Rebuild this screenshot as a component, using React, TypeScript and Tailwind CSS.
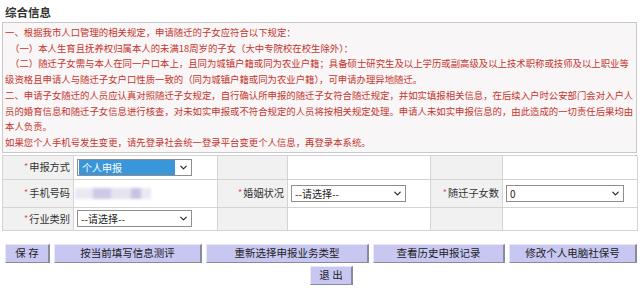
import { ChevronDown } from 'lucide-react';

const notice = [
  { text: '一、根据我市人口管理的相关规定，申请随迁的子女应符合以下规定：', indent: false },
  { text: '（一）本人生育且抚养权归属本人的未满18周岁的子女（大中专院校在校生除外）：', indent: true },
  { text: '（二）随迁子女需与本人在同一户口本上，且同为城镇户籍或同为农业户籍；具备硕士研究生及以上学历或副高级及以上技术职称或技师及以上职业等', indent: true },
  { text: '级资格且申请人与随迁子女户口性质一致的（同为城镇户籍或同为农业户籍），可申请办理异地随迁。', indent: false },
  { text: '二、申请子女随迁的人员应认真对照随迁子女规定，自行确认所申报的随迁子女符合随迁规定，并如实填报相关信息，在后续入户时公安部门会对入户人', indent: false },
  { text: '员的婚育信息和随迁子女信息进行核查，对未如实申报或不符合规定的人员将按相关规定处理。申请人未如实申报信息的，由此造成的一切责任后果均由', indent: false },
  { text: '本人负责。', indent: false },
  { text: '如果您个人手机号发生变更，请先登录社会统一登录平台变更个人信息，再登录本系统。', indent: false },
];

function Label({ text }: { text?: string }) {
  return (
    <div className="flex items-center justify-end pr-[3px] bg-[#f1f1f1] border-r border-b border-[#d4d4d4] text-[10.2px] text-[#333]">
      {text && (
        <>
          <span className="text-[#e05050] text-[9px] mr-[1px]">*</span>
          {text}
        </>
      )}
    </div>
  );
}

function Cell({ children }: { children?: React.ReactNode }) {
  return (
    <div className="flex items-center pl-[3px] bg-white border-r border-b border-[#d4d4d4]">
      {children}
    </div>
  );
}

function FakeSelect({ value, width, selected }: { value: string; width: string; selected?: boolean }) {
  return (
    <div className={`${width} h-[17px] flex items-center border border-[#8e8e8e] bg-white text-[10px] text-[#222]`}>
      <div className={`flex-1 h-full flex items-center pl-[3px] ${selected ? 'bg-[#3a96d8] text-white m-[1px] h-[13px]' : ''}`}>
        {value}
      </div>
      <ChevronDown className="w-[11px] h-[11px] mx-[2px] text-[#222]" strokeWidth={2.5} />
    </div>
  );
}

function Btn({ label, width }: { label: string; width: string }) {
  return (
    <button
      type="button"
      className={`${width} h-[19px] flex items-center justify-center bg-[#c7c7f2] border-t border-l border-[#e8e8fa] border-r-2 border-b border-r-[#8a8a9a] border-b-[#8a8a9a] text-[10.5px] text-[#222]`}
    >
      {label}
    </button>
  );
}

export default function App() {
  return (
    <div className="w-[640px] h-[292px] bg-white overflow-hidden font-['Noto_Sans_CJK_SC','Noto_Sans',sans-serif]">
      <div className="h-[22px] pl-[5px] pt-[4px] text-[11.5px] leading-[16px] font-bold text-[#333]">综合信息</div>

      <div className="ml-[2px] mr-[3px] border border-[#c9c9c9] bg-[#f8f6f6] pl-[2px] pt-[2px] pb-[1px] text-[9.4px] leading-[15.7px] text-[#c4352e]">
        {notice.map((line, i) => (
          <div key={i} className={`whitespace-nowrap ${line.indent ? 'pl-[5px]' : ''}`}>
            {line.text}
          </div>
        ))}
      </div>

      <div className="ml-[2px] mr-[3px] mt-[2px] grid grid-cols-[71px_144px_70px_143px_72px_135px] grid-rows-[24px_28px_23px] border-t border-l border-[#d4d4d4] border-r-2 border-r-[#8a8a8a]">
        <Label text="申报方式" />
        <Cell>
          <FakeSelect value="个人申报" width="w-[115px]" selected />
        </Cell>
        <Label />
        <Cell />
        <Label />
        <Cell />

        <Label text="手机号码" />
        <Cell>
          <div className="flex items-center h-[11px] w-[76px] -ml-[2px] blur-[1.5px]">
            <div className="w-[18px] h-full bg-[#ebe8f2]" />
            <div className="w-[18px] h-full bg-[#cfc8e6]" />
            <div className="w-[20px] h-full bg-[#e6e2f0]" />
            <div className="w-[10px] h-full bg-[#c9c1e2]" />
            <div className="w-[10px] h-full bg-[#ebe8f2]" />
          </div>
        </Cell>
        <Label text="婚姻状况" />
        <Cell>
          <FakeSelect value="--请选择--" width="w-[115px]" />
        </Cell>
        <Label text="随迁子女数" />
        <Cell>
          <FakeSelect value="0" width="w-[118px]" />
        </Cell>

        <Label text="行业类别" />
        <Cell>
          <FakeSelect value="--请选择--" width="w-[115px]" />
        </Cell>
        <Label />
        <Cell />
        <Label />
        <Cell />
      </div>

      <div className="flex gap-[4px] pl-[5px] mt-[13px]">
        <Btn label="保 存" width="w-[45px]" />
        <Btn label="按当前填写信息测评" width="w-[148px]" />
        <Btn label="重新选择申报业务类型" width="w-[163px]" />
        <Btn label="查看历史申报记录" width="w-[132px]" />
        <Btn label="修改个人电脑社保号" width="w-[128px]" />
      </div>
      <div className="flex pl-[310px] mt-[3px]">
        <Btn label="退 出" width="w-[43px]" />
      </div>
    </div>
  );
}
